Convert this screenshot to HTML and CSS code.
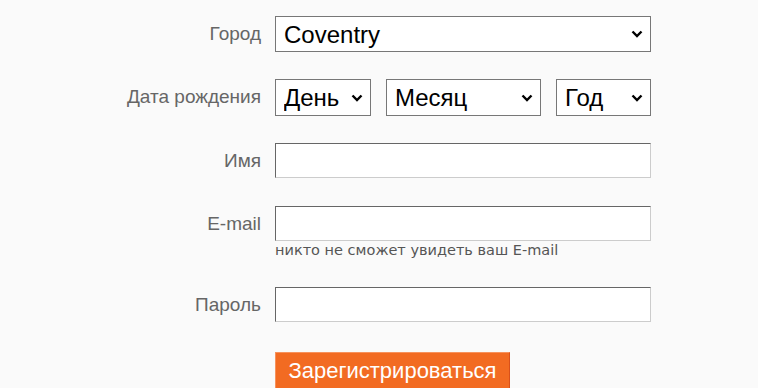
FILE: index.html
```html
<!DOCTYPE html>
<html lang="ru">
<head>
	<meta charset="UTF-8">
	<title>Регистрация</title>
	<link rel="stylesheet" href="styles.css">
</head>
<body>
	<form class="reg">
		<label class="reg-label">Город</label>
		<div class="reg-field">
			<select class="sel sel-city">
				<option>Coventry</option>
			</select>
		</div>

		<label class="reg-label">Дата рождения</label>
		<div class="reg-field date-row">
			<select class="sel sel-day"><option>День</option></select>
			<select class="sel sel-month"><option>Месяц</option></select>
			<select class="sel sel-year"><option>Год</option></select>
		</div>

		<label class="reg-label">Имя</label>
		<div class="reg-field">
			<input class="txt" type="text">
		</div>

		<label class="reg-label">E-mail</label>
		<div class="reg-field">
			<input class="txt" type="text">
			<div class="hint">никто не сможет увидеть ваш E-mail</div>
		</div>

		<label class="reg-label">Пароль</label>
		<div class="reg-field">
			<input class="txt" type="password">
		</div>

		<div></div>
		<div class="reg-field btn-row">
			<button type="button" class="btn">Зарегистрироваться</button>
		</div>
	</form>
</body>
</html>
```

FILE: styles.css
```css
* {
	padding: 0;
	margin: 0;
	box-sizing: border-box;
}
body {
	background: #fafafa;
	font-family: "Liberation Sans", Arial, sans-serif;
}
.reg {
	display: grid;
	grid-template-columns: 261px 376px;
	column-gap: 14px;
	row-gap: 27px;
	padding-top: 16px;
	align-items: start;
}
.reg-label {
	text-align: right;
	font-size: 19px;
	color: #666;
	line-height: 36px;
}
/* стрелка у select своя, как в исходнике */
.sel {
	-webkit-appearance: none;
	appearance: none;
	height: 36px;
	border: 1px solid #777;
	border-radius: 0;
	background: #fff url("data:image/svg+xml,%3Csvg xmlns='http://www.w3.org/2000/svg' width='12' height='8' viewBox='0 0 12 8'%3E%3Cpath d='M1.5 1.5 6 6 10.5 1.5' fill='none' stroke='%23000' stroke-width='2.4'/%3E%3C/svg%3E") no-repeat right 7px center;
	font-family: "Liberation Sans", Arial, sans-serif;
	font-size: 24px;
	color: #000;
	padding-left: 8px;
}
.sel-city {
	width: 100%;
}
.date-row {
	display: flex;
	gap: 15px;
}
.date-row .sel {
	height: 37px;
}
.sel-day {
	width: 96px;
}
.sel-month {
	width: 155px;
}
.sel-year {
	width: 95px;
}
.txt {
	display: block;
	width: 100%;
	height: 35px;
	border: 1px solid;
	border-color: #666 #ccc #ccc #666;
	background: #fff;
	outline: none;
}
.hint {
	font-family: "DejaVu Sans", Verdana, sans-serif;
	font-size: 14.5px;
	color: #555;
	line-height: 19px;
}
.btn-row {
	margin-top: 2px;
}
.btn {
	width: 235px;
	height: 42px;
	background: #f26b22;
	border: 1px solid;
	border-color: #f7925c #d9501a #d9501a #f7925c;
	color: #fff;
	font-family: "Liberation Sans", Arial, sans-serif;
	font-size: 22px;
	text-align: center;
	padding-bottom: 4px;
}
```
